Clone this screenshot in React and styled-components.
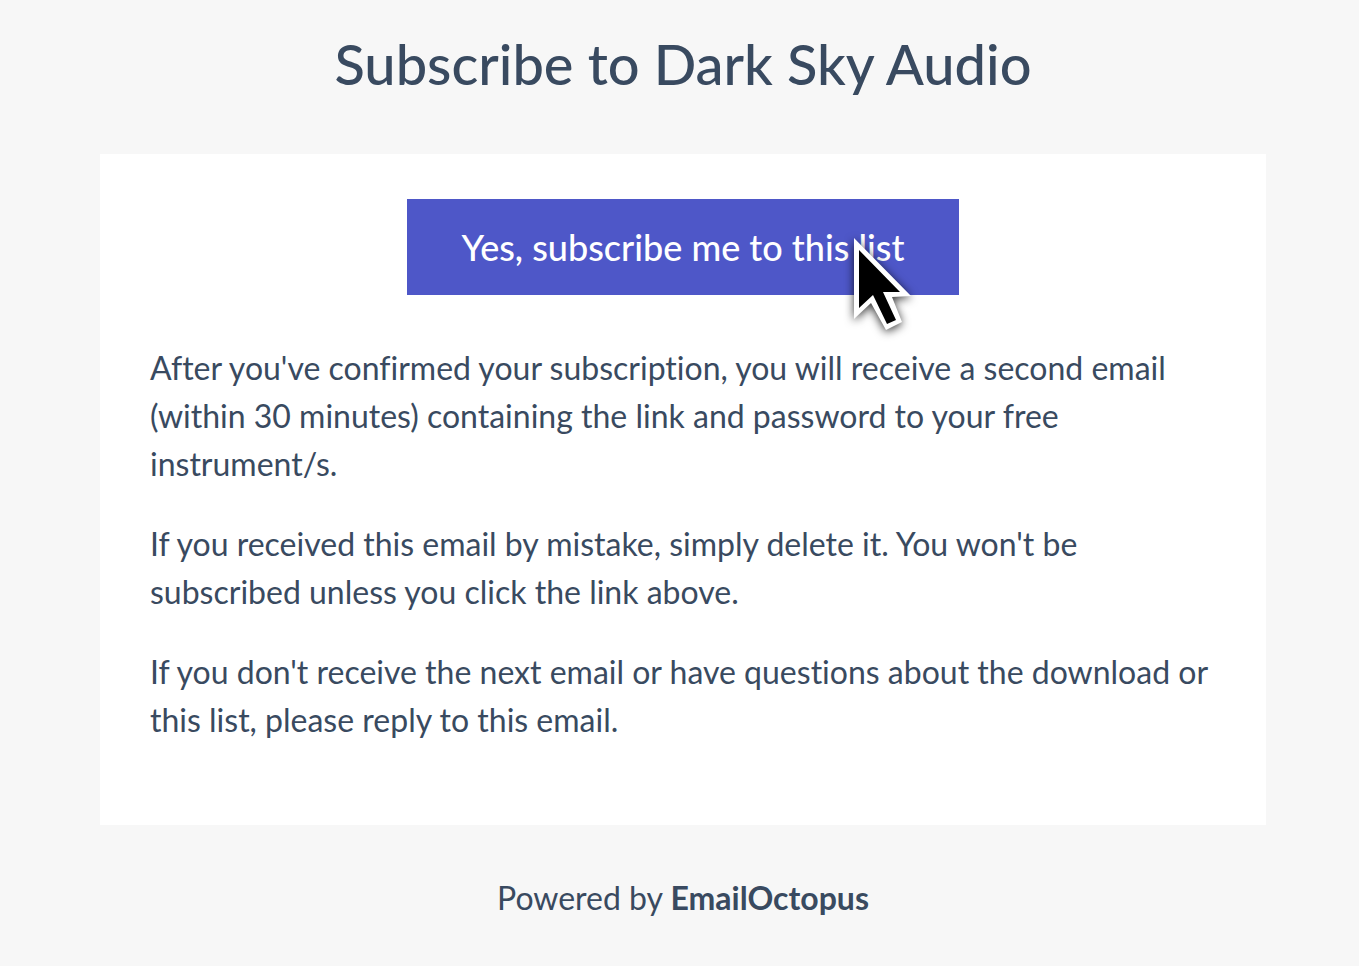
import React from "react";
import styled, { createGlobalStyle } from "styled-components";

const GlobalStyle = createGlobalStyle`
  * {
    box-sizing: border-box;
  }
  body {
    margin: 0;
    background: #f7f7f7;
    color: #394a60;
    font-family: Lato, sans-serif;
    font-variant-ligatures: no-common-ligatures;
  }
`;

const Page = styled.main`
  padding: 30px 93px 32px 100px;
`;

const Title = styled.h1`
  margin: 0 0 56px;
  font-size: 56px;
  font-weight: 500;
  line-height: 68px;
  text-align: center;
`;

const Card = styled.section`
  padding: 45px 50px 81px;
  background: #fff;
`;

const ButtonRow = styled.div`
  position: relative;
  width: fit-content;
  margin: 0 auto 49px;
`;

const SubscribeButton = styled.button`
  display: block;
  padding: 24px 54px;
  border: 0;
  background: #4e57c8;
  color: #fff;
  font-family: inherit;
  font-size: 36px;
  font-weight: 500;
  line-height: 48px;
  cursor: pointer;
`;

const Pointer = styled.svg`
  position: absolute;
  top: 31px;
  right: 39px;
  width: 72px;
  height: 108px;
  pointer-events: none;
  filter: drop-shadow(0 2px 5px rgba(0, 0, 0, 0.8));
`;

const Text = styled.p`
  margin: 0 0 32px;
  font-size: 32px;
  line-height: 48px;
  &:last-child {
    margin-bottom: 0;
  }
`;

const Footer = styled.footer`
  margin-top: 49px;
  font-size: 32px;
  line-height: 48px;
  text-align: center;
`;

const FooterLink = styled.a`
  color: inherit;
  font-weight: 700;
  text-decoration: none;
`;

const paragraphs = [
  "After you've confirmed your subscription, you will receive a second email (within 30 minutes) containing the link and password to your free instrument/s.",
  "If you received this email by mistake, simply delete it. You won't be subscribed unless you click the link above.",
  "If you don't receive the next email or have questions about the download or this list, please reply to this email."
];

function App() {
  return (
    <Page>
      <GlobalStyle />
      <Title>Subscribe to Dark Sky Audio</Title>
      <Card>
        <ButtonRow>
          <SubscribeButton type="button">
            Yes, subscribe me to this list
          </SubscribeButton>
          <Pointer viewBox="0 0 72 108" aria-hidden="true">
            <path
              d="M6 8 V89 L23 73 L38 100 L54 92 L44 67 L63 66 Z"
              fill="#fff"
            />
            <path d="M11 20 V78 L25 65 L39 94 L48 90 L35 62 H52 Z" />
          </Pointer>
        </ButtonRow>
        {paragraphs.map(text => (
          <Text key={text}>{text}</Text>
        ))}
      </Card>
      <Footer>
        Powered by <FooterLink href="#">EmailOctopus</FooterLink>
      </Footer>
    </Page>
  );
}

export default App;
